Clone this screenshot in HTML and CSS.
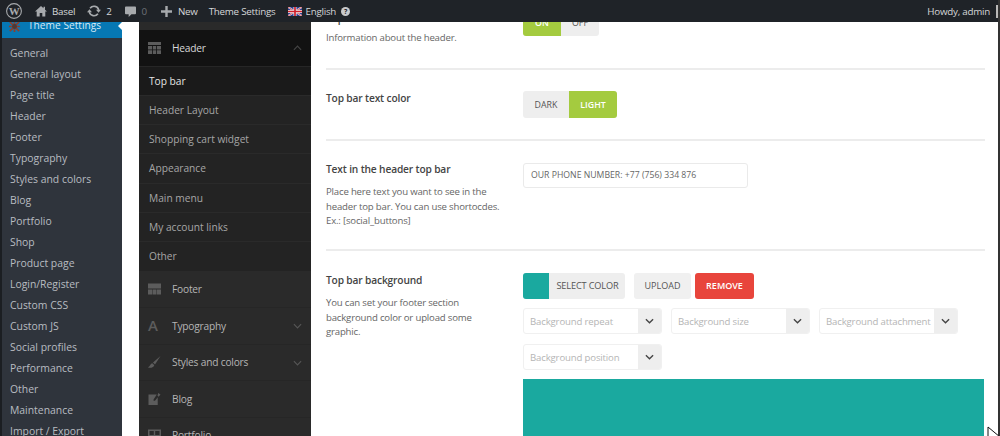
FILE: index.html
```html
<!DOCTYPE html>
<html lang="en">
<head>
<meta charset="utf-8">
<title>Theme Settings</title>
<link rel="stylesheet" href="styles.css">
</head>
<body>
<header class="adminbar">
  <svg class="wp" viewBox="0 0 16 16"><circle cx="8" cy="8" r="7.400" fill="none" stroke="#a7aaad" stroke-width="1.100"/><text x="8" y="12.400" text-anchor="middle" class="wp-w">W</text></svg>
  <svg class="ico home" viewBox="0 0 12 12"><path d="M6 1 0 6.500h1.700V11.500h3V8h2.600v3.500h3V6.500H12L10 4.700V1.800H8.500V3.300Z" fill="#a7aaad"/></svg>
  <span class="ab-item ab-basel">Basel</span>
  <svg class="ico upd" viewBox="0 0 14 12"><path d="M7 2a4 4 0 0 1 3.800 2.700H9l2.500 3L14 4.700h-1.500A5.700 5.700 0 0 0 2.400 2.800L3.800 3.800A4 4 0 0 1 7 2ZM7 10a4 4 0 0 1-3.800-2.700H5l-2.500-3L0 7.300h1.500a5.700 5.700 0 0 0 10.100 1.900L10.200 8.200A4 4 0 0 1 7 10Z" fill="#a7aaad"/></svg>
  <span class="ab-item ab-two">2</span>
  <svg class="ico cmt" viewBox="0 0 12 12"><path d="M1 .5h10a1 1 0 0 1 1 1v6.500a1 1 0 0 1-1 1H7L4 12V9H1a1 1 0 0 1-1-1V1.500a1 1 0 0 1 1-1Z" fill="#a7aaad"/></svg>
  <span class="ab-item ab-zero">0</span>
  <svg class="ico plus" viewBox="0 0 11 11"><path d="M4.300 0h2.400v4.300H11v2.400H6.700V11H4.300V6.700H0V4.300h4.300Z" fill="#a7aaad"/></svg>
  <span class="ab-item ab-new">New</span>
  <span class="ab-item ab-ts">Theme Settings</span>
  <svg class="flag" viewBox="0 0 14 9"><rect width="14" height="9" fill="#2a3f8f"/><path d="M0 0 14 9M14 0 0 9" stroke="#eee" stroke-width="1.800"/><path d="M0 0 14 9M14 0 0 9" stroke="#d0202c" stroke-width=".7"/><path d="M7 0v9M0 4.500h14" stroke="#eee" stroke-width="3"/><path d="M7 0v9M0 4.500h14" stroke="#d0202c" stroke-width="1.700"/></svg>
  <span class="ab-item ab-lang">English</span>
  <span class="help">?</span>
  <span class="ab-item ab-howdy">Howdy, admin</span>
  <span class="avatar"></span>
</header>

<div class="workspace">
  <nav class="wpmenu">
    <div class="current">
      <svg class="gear" viewBox="0 0 14 14"><path d="M2 2l10 10M12 2 2 12M7 1v12M1 7h12" stroke="#8d3f2a" stroke-width="1.800"/><circle cx="7" cy="7" r="2.600" fill="#4a3a38"/></svg>
      <span>Theme Settings</span>
    </div>
    <ul class="submenu">
      <li>General</li><li>General layout</li><li>Page title</li><li>Header</li><li>Footer</li>
      <li>Typography</li><li>Styles and colors</li><li>Blog</li><li>Portfolio</li><li>Shop</li>
      <li>Product page</li><li>Login/Register</li><li>Custom CSS</li><li>Custom JS</li><li>Social profiles</li>
      <li>Performance</li><li>Other</li><li>Maintenance</li><li>Import / Export</li>
    </ul>
  </nav>

  <aside class="panel">
    <div class="sec sec-open">
      <svg class="sec-ico" viewBox="0 0 13 12"><path d="M0 0h13v3H0ZM0 4h4v3.500H0ZM4.800 4h3.400v3.500H4.800ZM9 4h4v3.500H9ZM0 8.300h4V12H0ZM4.800 8.300h3.400V12H4.800ZM9 8.300h4V12H9Z" fill="#5c5c5c"/></svg>
      <span>Header</span>
      <svg class="chev" viewBox="0 0 10 6"><path d="M1 5l4-4 4 4" fill="none" stroke="#444" stroke-width="1.300"/></svg>
    </div>
    <ul class="subs">
      <li class="on">Top bar</li><li>Header Layout</li><li>Shopping cart widget</li><li>Appearance</li>
      <li>Main menu</li><li>My account links</li><li>Other</li>
    </ul>
    <div class="sec">
      <svg class="sec-ico" viewBox="0 0 13 11"><path d="M0 0h13v5H0ZM0 6h4v5H0ZM4.500 6h4v5h-4ZM9 6h4v5H9Z" fill="#5c5c5c"/></svg>
      <span>Footer</span>
    </div>
    <div class="sec">
      <span class="sec-a">A</span>
      <span>Typography</span>
      <svg class="chev" viewBox="0 0 10 6"><path d="M1 1l4 4 4-4" fill="none" stroke="#555" stroke-width="1.300"/></svg>
    </div>
    <div class="sec">
      <svg class="sec-ico" viewBox="0 0 13 12"><path d="M12.500 0 5 6.500 7 8.500ZM4.300 7.300C2.500 7.500 2.500 10 0 11.500c3 .8 6-.3 6.300-2.300Z" fill="#5c5c5c"/></svg>
      <span>Styles and colors</span>
      <svg class="chev" viewBox="0 0 10 6"><path d="M1 1l4 4 4-4" fill="none" stroke="#555" stroke-width="1.300"/></svg>
    </div>
    <div class="sec">
      <svg class="sec-ico" viewBox="0 0 13 13"><path d="M0 1.500h9L5.500 7v1.500H7L10 4.500V13H0ZM10.500 0 13 1.500 11 4 9.800 3Z" fill="#5c5c5c"/></svg>
      <span>Blog</span>
    </div>
    <div class="sec">
      <svg class="sec-ico" viewBox="0 0 13 11"><path d="M0 0h13v11H0ZM1.500 1.500v4h4.300v-4ZM7.200 1.500v4h4.300v-4Z" fill="#5c5c5c" fill-rule="evenodd"/></svg>
      <span>Portfolio</span>
    </div>
  </aside>

  <main class="content">
    <section class="row row-first">
      <div class="info">
        <h3 class="label">Top bar</h3>
        <p class="desc">Information about the header.</p>
      </div>
      <div class="seg seg-onoff"><span class="seg-btn active">ON</span><span class="seg-btn">OFF</span></div>
    </section>
    <section class="row row-color">
      <div class="info"><h3 class="label">Top bar text color</h3></div>
      <div class="seg seg-dl"><span class="seg-btn">DARK</span><span class="seg-btn active">LIGHT</span></div>
    </section>
    <section class="row row-text">
      <div class="info">
        <h3 class="label">Text in the header top bar</h3>
        <p class="desc">Place here text you want to see in the header top bar. You can use shortocdes. Ex.: [social_buttons]</p>
      </div>
      <div class="field">OUR PHONE NUMBER: +77 (756) 334 876</div>
    </section>
    <section class="row row-bg">
      <div class="info">
        <h3 class="label">Top bar background</h3>
        <p class="desc">You can set your footer section background color or upload some graphic.</p>
      </div>
      <div class="bg-controls">
        <div class="buttons">
          <div class="picker"><span class="swatch"></span><span class="picker-text">SELECT COLOR</span></div>
          <span class="btn btn-upload">UPLOAD</span>
          <span class="btn btn-remove">REMOVE</span>
        </div>
        <div class="selects">
          <div class="select"><span>Background repeat</span><i><svg viewBox="0 0 10 6"><path d="M1 1l4 4 4-4" fill="none" stroke="#444" stroke-width="1.500"/></svg></i></div>
          <div class="select"><span>Background size</span><i><svg viewBox="0 0 10 6"><path d="M1 1l4 4 4-4" fill="none" stroke="#444" stroke-width="1.500"/></svg></i></div>
          <div class="select"><span>Background attachment</span><i><svg viewBox="0 0 10 6"><path d="M1 1l4 4 4-4" fill="none" stroke="#444" stroke-width="1.500"/></svg></i></div>
          <div class="select"><span>Background position</span><i><svg viewBox="0 0 10 6"><path d="M1 1l4 4 4-4" fill="none" stroke="#444" stroke-width="1.500"/></svg></i></div>
        </div>
        <div class="preview"></div>
      </div>
    </section>
  </main>
</div>
<svg class="cursor" viewBox="0 0 13 18"><path d="M1 1v15l4-4 3 6 3-1.500-3-5.500h5Z" fill="#fff" stroke="#111" stroke-width="1"/></svg>
</body>
</html>
```

FILE: styles.css
```css
* { box-sizing: border-box; }
html, body { margin: 0; height: 436px; overflow: hidden; }
body {
  font-family: "Open Sans", "Noto Sans", sans-serif;
  background: #fff;
  display: flex;
  flex-direction: column;
  border-right: 2px solid #333;
}
ul { list-style: none; margin: 0; padding: 0; }
h3, p { margin: 0; }

.adminbar {
  flex: 0 0 22px;
  margin-right: -2px;
  background: #1f2328;
  display: flex;
  align-items: center;
  font-size: 9.8px;
  letter-spacing: -0.25px;
  color: #d5d7d9;
  padding-left: 6px;
  position: relative;
  z-index: 2;
}
.wp { width: 16px; height: 16px; flex: none; }
.wp-w { font: bold 11px "Liberation Serif", serif; fill: #a7aaad; }
.ico { flex: none; display: block; }
.home { width: 12px; height: 12px; margin-left: 13px; }
.ab-item { white-space: nowrap; }
.ab-basel { margin-left: 5px; }
.upd { width: 14px; height: 12px; margin-left: 12px; }
.ab-two { margin-left: 5px; }
.cmt { width: 11px; height: 11px; margin-left: 13px; }
.ab-zero { margin-left: 6px; color: #6d7177; }
.plus { width: 11px; height: 11px; margin-left: 14px; }
.ab-new { margin-left: 6px; }
.ab-ts { margin-left: 11px; }
.flag { width: 14px; height: 9px; margin-left: 13px; flex: none; }
.ab-lang { margin-left: 3px; }
.help {
  width: 9px; height: 9px; border-radius: 50%;
  background: #c8cacc; color: #1f2328;
  font-size: 7px; font-weight: 700; line-height: 9px; text-align: center;
  margin-left: 5px;
}
.ab-howdy { margin-left: auto; }
.avatar { width: 4px; height: 13px; background: #b9b9b9; margin: 0 0 0 6px; }

.workspace { flex: 1; display: flex; min-height: 0; overflow: hidden; }

.wpmenu {
  flex: 0 0 122px;
  border-left: 2px solid #1b1e22;
  background: #2f343c;
  overflow: hidden;
  margin-right: 17px;
  position: relative;
}
.current {
  height: 16px;
  background: #0678b4;
  color: #d8eaf4;
  font-size: 10.2px;
  display: flex;
  align-items: center;
  gap: 7px;
  padding-left: 6px;
  position: relative;
  line-height: 8px;
}
.current span { transform: translateY(-5px); }
.current::after {
  content: "";
  position: absolute;
  right: 0; top: 0;
  border: 4px solid transparent;
  border-right-color: #fff;
  border-left-width: 0;
}
.gear { width: 13px; height: 13px; flex: none; transform: translateY(-4px); }
.submenu { padding-top: 5px; }
.submenu li {
  height: 21px;
  line-height: 21px;
  padding-left: 8px;
  font-size: 10.4px;
  color: #b8bcc1;
  white-space: nowrap;
}

.panel {
  flex: 0 0 172px;
  background: #2a2a2a;
  color: #b5b5b5;
  font-size: 10.2px;
  padding-top: 8px;
  overflow: hidden;
}
.sec {
  height: 36.5px;
  display: flex;
  align-items: center;
  padding-left: 9px;
  position: relative;
  border-bottom: 1px solid #262626;
  letter-spacing: -0.2px;
}
.sec-open { background: #121212; color: #d8d8d8; }
.sec-ico { width: 13px; height: 12px; flex: none; margin-right: 11px; }
.sec-a { width: 13px; margin-right: 11px; font-size: 15px; font-weight: 600; color: #5c5c5c; line-height: 1; }
.chev { width: 9px; height: 6px; position: absolute; right: 9px; top: 15px; }
.subs { background: #232323; }
.subs li {
  height: 29.3px;
  line-height: 29.3px;
  padding-left: 10px;
  font-size: 10.2px;
  color: #a6a6a6;
  border-bottom: 1px solid #2a2a2a;
}
.subs li.on { background: #1a1a1a; color: #e4e4e4; }

.content {
  flex: 1;
  min-width: 0;
  padding: 0 13px 0 15px;
  overflow: hidden;
  background: #fff;
}
.row {
  display: flex;
  border-bottom: 2px solid #ececec;
}
.row:last-child { border-bottom: 0; }
.info { flex: 0 0 197px; padding-right: 18px; }
.label { font-size: 10.2px; letter-spacing: -0.15px; font-weight: 600; color: #444; line-height: 14px; }
.desc { font-size: 9.6px; letter-spacing: -0.18px; line-height: 14.5px; color: #666; margin-top: 9px; }

.row-first { height: 60px; margin-top: -12px; }
.row-first .info { padding-top: 1px; }
.row-first .desc { margin-top: 6px; }
.row-color { height: 71px; padding-top: 21px; }
.row-text { height: 110px; padding-top: 21px; }
.row-bg { padding-top: 22px; }

.seg { display: flex; height: 26px; border-radius: 3px; overflow: hidden; background: #eeeeee; align-self: flex-start; }
.seg-btn { font-size: 8.8px; color: #555; display: flex; align-items: center; justify-content: center; }
.seg-btn.active { background: #a4cb3f; color: #fff; font-weight: 600; }
.seg-onoff .seg-btn { width: 38px; }
.seg-dl { height: 27px; }
.seg-dl .seg-btn:first-child { width: 46px; }
.seg-dl .seg-btn.active { width: 48px; }

.field {
  width: 225px;
  height: 25px;
  margin-top: 1px;
  border: 1px solid #eaeaea;
  border-radius: 3px;
  font-size: 8.7px;
  color: #666;
  line-height: 23px;
  padding-left: 7px;
  white-space: nowrap;
}

.bg-controls { flex: 1; min-width: 0; display: flex; flex-direction: column; }
.buttons { display: flex; align-items: center; height: 26px; }
.picker { display: flex; height: 26px; width: 102px; background: #eeeeee; border-radius: 3px; overflow: hidden; }
.swatch { flex: 0 0 26px; background: #1aa99f; }
.picker-text { flex: 1; font-size: 9.2px; letter-spacing: -0.15px; color: #555; line-height: 26px; text-align: center; padding-left: 1px; }
.btn { height: 26px; line-height: 26px; font-size: 9px; text-align: center; border-radius: 3px; }
.btn-upload { width: 57px; background: #f0f0f0; color: #555; margin-left: 9px; }
.btn-remove { width: 59px; background: #e8453c; color: #fff; margin-left: 4px; font-weight: 600; }
.selects { display: flex; flex-wrap: wrap; gap: 10px 9px; margin-top: 9px; }
.select {
  width: 139px;
  height: 26px;
  border: 1px solid #f0f0f0;
  border-radius: 3px;
  display: flex;
  align-items: center;
  font-size: 9.6px;
  letter-spacing: -0.15px;
  color: #b5b5b5;
  padding-left: 6px;
  overflow: hidden;
}
.select span { flex: 1; white-space: nowrap; }
.select i { flex: 0 0 23px; height: 26px; background: #eeeeee; display: flex; align-items: center; justify-content: center; }
.select svg { width: 9px; height: 6px; }
.preview { height: 70px; background: #1aa99f; margin: 9px 1px 0 0; }

.cursor { position: absolute; left: 987px; top: 426px; width: 13px; height: 18px; }
```
